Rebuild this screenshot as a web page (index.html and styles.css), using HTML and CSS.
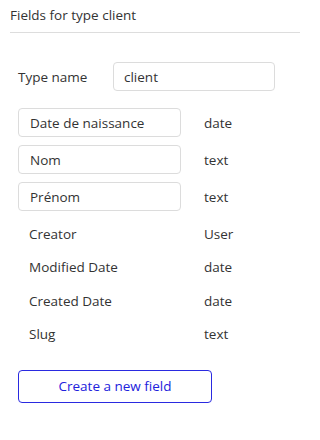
FILE: index.html
```html
<!DOCTYPE html>
<html>
<head>
<meta charset="utf-8">
<link rel="stylesheet" href="styles.css">
</head>
<body>
<div class="panel">
  <div class="header">Fields for type client</div>
  <div class="type-row">
    <span class="type-label">Type name</span>
    <div class="input type-input">client</div>
  </div>
  <div class="fields">
    <div class="field">
      <div class="input field-name">Date de naissance</div>
      <span class="field-type">date</span>
    </div>
    <div class="field">
      <div class="input field-name">Nom</div>
      <span class="field-type">text</span>
    </div>
    <div class="field">
      <div class="input field-name">Prénom</div>
      <span class="field-type">text</span>
    </div>
  </div>
  <div class="builtins">
    <div class="field">
      <span class="plain-name">Creator</span>
      <span class="field-type">User</span>
    </div>
    <div class="field">
      <span class="plain-name">Modified Date</span>
      <span class="field-type">date</span>
    </div>
    <div class="field">
      <span class="plain-name">Created Date</span>
      <span class="field-type">date</span>
    </div>
    <div class="field">
      <span class="plain-name">Slug</span>
      <span class="field-type">text</span>
    </div>
  </div>
  <button class="create-btn">Create a new field</button>
</div>
</body>
</html>
```
FILE: styles.css
```css
html, body {
  margin: 0;
  padding: 0;
  background: #ffffff;
}
body {
  font-family: "Open Sans", "Liberation Sans", sans-serif;
  font-size: 13.5px;
  line-height: 20px;
  color: #333333;
}
.panel {
  display: flex;
  flex-direction: column;
  width: 300px;
}
.header {
  margin-left: 10px;
  padding: 5px 0 7px 0;
  border-bottom: 1px solid #dddddd;
}
.type-row {
  display: flex;
  align-items: center;
  margin: 29px 0 0 18px;
  height: 29px;
}
.type-label {
  width: 95px;
}
.input {
  box-sizing: border-box;
  height: 29px;
  border: 1px solid #dcdcdc;
  border-radius: 4px;
  padding: 0 10px;
  display: flex;
  align-items: center;
  white-space: nowrap;
}
.type-input {
  width: 162px;
}
.fields {
  display: flex;
  flex-direction: column;
  gap: 8px;
  margin: 17px 0 0 18px;
}
.builtins {
  display: flex;
  flex-direction: column;
  gap: 4.6px;
  margin: 8px 0 0 18px;
}
.field {
  display: grid;
  grid-template-columns: 163px auto;
  column-gap: 23px;
  align-items: center;
  height: 29px;
}
.field-name {
  width: 163px;
  padding-left: 11px;
}
.plain-name {
  padding-left: 11px;
}
.create-btn {
  box-sizing: border-box;
  margin: 21px 0 0 18px;
  width: 194px;
  height: 33px;
  border: 1px solid #2a2ae0;
  border-radius: 4px;
  background: #ffffff;
  color: #2121dc;
  font-family: "Open Sans", "Liberation Sans", sans-serif;
  font-size: 13.5px;
  padding: 0;
  cursor: pointer;
}
```
